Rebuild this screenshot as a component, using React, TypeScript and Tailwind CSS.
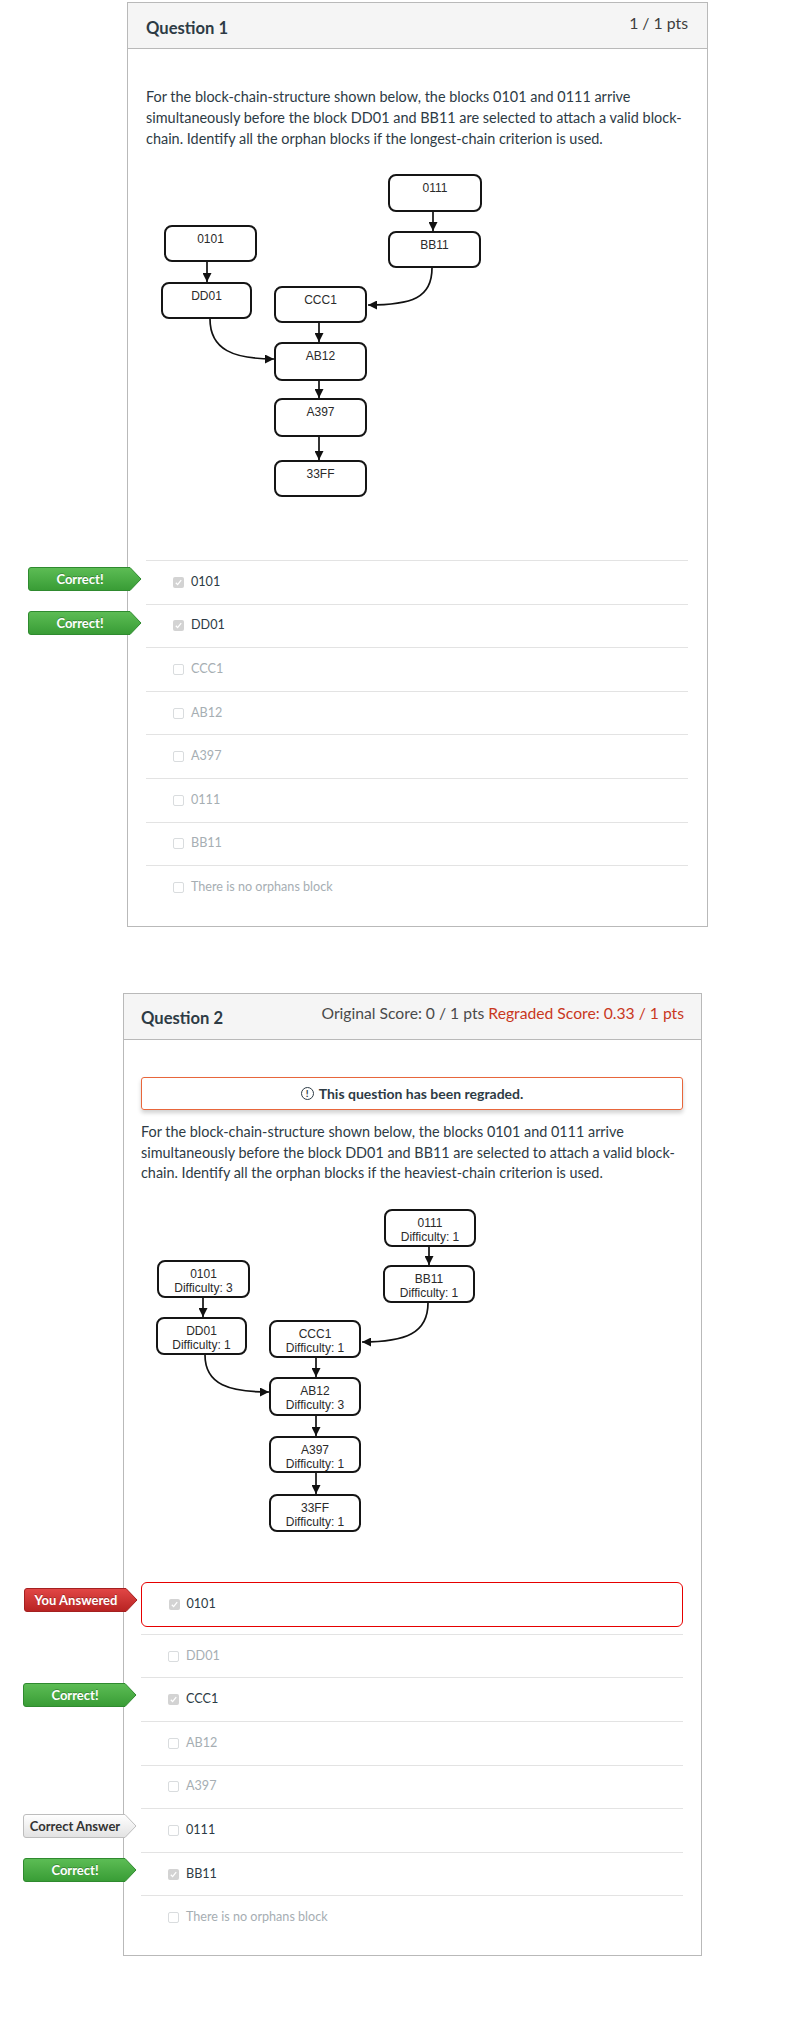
import React from 'react';

const INK = '#2d3b45';

type Box = { x: number; y: number; w: number; h: number; lines: string[] };

function Node({ b }: { b: Box }) {
  const cx = b.x + b.w / 2;
  return (
    <g>
      <rect x={b.x + 1} y={b.y + 1} width={b.w - 2} height={b.h - 2} rx={7} fill="#fff" stroke="#151515" strokeWidth={2} />
      {b.lines.map((t, i) => (
        <text
          key={i}
          x={cx}
          y={b.y + 18 + i * 14}
          textAnchor="middle"
          fontSize={12}
          fill="#2a2a2a"
          fontFamily="'Liberation Sans', Arial, sans-serif"
        >
          {t}
        </text>
      ))}
    </g>
  );
}

function Diagram({ id, vb, boxes, paths }: { id: string; vb: [number, number, number, number]; boxes: Box[]; paths: string[] }) {
  return (
    <svg width={vb[2]} height={vb[3]} viewBox={vb.join(' ')} className="block">
      <defs>
        <marker id={id} viewBox="0 0 10 10" refX="10" refY="5" markerWidth="10" markerHeight="9" markerUnits="userSpaceOnUse" orient="auto">
          <path d="M0 0 L10 5 L0 10 z" fill="#111" />
        </marker>
      </defs>
      {paths.map((d, i) => (
        <path key={i} d={d} fill="none" stroke="#111" strokeWidth={1.7} markerEnd={`url(#${id})`} />
      ))}
      {boxes.map((b, i) => (
        <Node key={i} b={b} />
      ))}
    </svg>
  );
}

type BadgeKind = 'green' | 'red' | 'gray';

function Badge({ kind, label }: { kind: BadgeKind; label: string }) {
  const fill = { green: 'url(#bd-green)', red: 'url(#bd-red)', gray: 'url(#bd-gray)' }[kind];
  const stroke = { green: '#2f8a2f', red: '#a52020', gray: '#bdbdbd' }[kind];
  return (
    <div className="relative w-[114px] h-[24px]">
      <svg width="114" height="24" className="absolute left-0 top-0">
        <defs>
          <linearGradient id="bd-green" x1="0" y1="0" x2="0" y2="1">
            <stop offset="0" stopColor="#5dbd55" />
            <stop offset="1" stopColor="#389c35" />
          </linearGradient>
          <linearGradient id="bd-red" x1="0" y1="0" x2="0" y2="1">
            <stop offset="0" stopColor="#e24746" />
            <stop offset="1" stopColor="#b72322" />
          </linearGradient>
          <linearGradient id="bd-gray" x1="0" y1="0" x2="0" y2="1">
            <stop offset="0" stopColor="#ffffff" />
            <stop offset="1" stopColor="#e2e2e2" />
          </linearGradient>
        </defs>
        <path
          d="M3 0.5 H102 L113 12 L102 23.5 H3 Q0.5 23.5 0.5 21 V3 Q0.5 0.5 3 0.5 Z"
          fill={fill}
          stroke={stroke}
          strokeWidth={1}
        />
      </svg>
      <span
        className={
          kind === 'gray'
            ? 'absolute left-0 top-0 w-[104px] text-center leading-[24px] text-[13px] font-bold text-[#333]'
            : 'absolute left-0 top-0 w-[104px] text-center leading-[24px] text-[13px] font-bold text-white [text-shadow:0_-1px_0_rgba(0,0,0,0.25)]'
        }
      >
        {label}
      </span>
    </div>
  );
}

function Check({ checked }: { checked: boolean }) {
  if (checked) {
    return (
      <span className="flex items-center justify-center w-[11px] h-[11px] rounded-[2px] bg-[#d3d3d3]">
        <svg width="9" height="9" viewBox="0 0 9 9">
          <path d="M1.8 4.8 L3.6 6.6 L7.2 2.2" fill="none" stroke="#fff" strokeWidth="1.3" />
        </svg>
      </span>
    );
  }
  return <span className="block w-[11px] h-[11px] rounded-[2px] border border-[#d9dcde] bg-white" />;
}

type Answer = { label: string; checked: boolean; dim: boolean; badge?: { kind: BadgeKind; label: string }; boxed?: boolean };

function AnswerRow({ a, badgeTop }: { a: Answer; badgeTop: string }) {
  return (
    <div
      className={
        a.boxed
          ? 'relative flex items-center h-[45px] border border-[#e60000] rounded-[6px] pl-[26.5px]'
          : 'relative flex items-center h-[43.6px] border-t border-[#e3e3e3] pl-[27px]'
      }
    >
      {a.badge && (
        <div className={`absolute left-[-118px] ${badgeTop}`}>
          <Badge kind={a.badge.kind} label={a.badge.label} />
        </div>
      )}
      <Check checked={a.checked} />
      <span className={`ml-[7px] text-[12.6px] ${a.dim ? 'text-[#a6aeb3]' : 'text-[#2d3b45]'}`}>{a.label}</span>
    </div>
  );
}

const q1Boxes: Box[] = [
  { x: 388, y: 174, w: 94, h: 38, lines: ['0111'] },
  { x: 164, y: 225, w: 93, h: 37, lines: ['0101'] },
  { x: 388, y: 231, w: 93, h: 37, lines: ['BB11'] },
  { x: 161, y: 282, w: 91, h: 37, lines: ['DD01'] },
  { x: 274, y: 286, w: 93, h: 37, lines: ['CCC1'] },
  { x: 274, y: 342, w: 93, h: 39, lines: ['AB12'] },
  { x: 274, y: 398, w: 93, h: 39, lines: ['A397'] },
  { x: 274, y: 460, w: 93, h: 37, lines: ['33FF'] },
];

const q1Paths = [
  'M207 262 V282',
  'M433 212 V231',
  'M432 268 C432 298 412 305 368 305',
  'M210 319 C210 350 234 359 274 359',
  'M319 323 V342',
  'M319 381 V398',
  'M319 437 V460',
];

const q2Boxes: Box[] = [
  { x: 384, y: 1209, w: 92, h: 38, lines: ['0111', 'Difficulty: 1'] },
  { x: 157, y: 1260, w: 93, h: 38, lines: ['0101', 'Difficulty: 3'] },
  { x: 383, y: 1265, w: 92, h: 38, lines: ['BB11', 'Difficulty: 1'] },
  { x: 156, y: 1317, w: 91, h: 38, lines: ['DD01', 'Difficulty: 1'] },
  { x: 269, y: 1320, w: 92, h: 38, lines: ['CCC1', 'Difficulty: 1'] },
  { x: 269, y: 1377, w: 92, h: 39, lines: ['AB12', 'Difficulty: 3'] },
  { x: 269, y: 1436, w: 92, h: 37, lines: ['A397', 'Difficulty: 1'] },
  { x: 269, y: 1494, w: 92, h: 38, lines: ['33FF', 'Difficulty: 1'] },
];

const q2Paths = [
  'M203 1298 V1317',
  'M429 1247 V1265',
  'M428 1303 C428 1333 406 1342 362 1342',
  'M205 1355 C205 1385 230 1392 269 1392',
  'M316 1358 V1377',
  'M316 1416 V1436',
  'M316 1473 V1494',
];

const q1Answers: Answer[] = [
  { label: '0101', checked: true, dim: false, badge: { kind: 'green', label: 'Correct!' } },
  { label: 'DD01', checked: true, dim: false, badge: { kind: 'green', label: 'Correct!' } },
  { label: 'CCC1', checked: false, dim: true },
  { label: 'AB12', checked: false, dim: true },
  { label: 'A397', checked: false, dim: true },
  { label: '0111', checked: false, dim: true },
  { label: 'BB11', checked: false, dim: true },
  { label: 'There is no orphans block', checked: false, dim: true },
];

const q2First: Answer = { label: '0101', checked: true, dim: false, boxed: true, badge: { kind: 'red', label: 'You Answered' } };

const q2Answers: Answer[] = [
  { label: 'DD01', checked: false, dim: true },
  { label: 'CCC1', checked: true, dim: false, badge: { kind: 'green', label: 'Correct!' } },
  { label: 'AB12', checked: false, dim: true },
  { label: 'A397', checked: false, dim: true },
  { label: '0111', checked: false, dim: false, badge: { kind: 'gray', label: 'Correct Answer' } },
  { label: 'BB11', checked: true, dim: false, badge: { kind: 'green', label: 'Correct!' } },
  { label: 'There is no orphans block', checked: false, dim: true },
];

export default function App() {
  return (
    <div className="w-[804px] min-h-[2024px] bg-white pt-[2px] font-[Lato,sans-serif]" style={{ color: INK }}>
      {/* Question 1 */}
      <div className="ml-[127px] w-[581px] border border-[#b9b9b9]">
        <div className="h-[46px] bg-[#f5f5f5] border-b border-[#b9b9b9] flex justify-between items-start pl-[18px] pr-[19px]">
          <div className="mt-[13px] leading-[24px] text-[16.6px] font-bold text-[#2d3b45]">Question 1</div>
          <div className="mt-[8px] leading-[24px] text-[15.8px] text-[#3d3d3d]">1 / 1 pts</div>
        </div>
        <div className="pl-[18px] pr-[19px] pb-[17px]">
          <p className="pt-[37px] text-[14.45px] leading-[21px] text-[#2d3b45]">
            For the block-chain-structure shown below, the blocks 0101 and 0111 arrive simultaneously before the block DD01 and BB11 are selected to attach a valid block-chain. Identify all the orphan blocks if the longest-chain criterion is used.
          </p>
          <div className="mt-[1px]">
            <Diagram id="arrow-q1" vb={[146, 150, 542, 360]} boxes={q1Boxes} paths={q1Paths} />
          </div>
          <div className="mt-[50px]">
            {q1Answers.map((a, i) => (
              <AnswerRow key={i} a={a} badgeTop="top-[6px]" />
            ))}
          </div>
        </div>
      </div>

      {/* Question 2 */}
      <div className="ml-[123px] mt-[66px] w-[579px] border border-[#b9b9b9]">
        <div className="h-[46px] bg-[#f5f5f5] border-b border-[#b9b9b9] flex justify-between items-start pl-[17px] pr-[17px]">
          <div className="mt-[12px] leading-[24px] text-[16.6px] font-bold text-[#2d3b45]">Question 2</div>
          <div className="mt-[7px] leading-[24px] text-[15.7px] text-[#4a4a4a]">
            Original Score: 0 / 1 pts <span className="text-[#c9381d]">Regraded Score: 0.33 / 1 pts</span>
          </div>
        </div>
        <div className="pl-[17px] pr-[18px] pb-[16px]">
          <div className="mt-[37px] h-[33px] border border-[#e8663b] rounded-[3px] shadow-[0_3px_4px_rgba(0,0,0,0.18)] flex items-center justify-center gap-[5px]">
            <span className="flex items-center justify-center w-[13px] h-[13px] rounded-full border border-[#2d3b45] text-[10px] font-bold leading-none">!</span>
            <span className="text-[14px] font-bold text-[#2d3b45]">This question has been regraded.</span>
          </div>
          <p className="mt-[12.5px] text-[14.4px] leading-[20.5px] text-[#2d3b45]">
            For the block-chain-structure shown below, the blocks 0101 and 0111 arrive simultaneously before the block DD01 and BB11 are selected to attach a valid block-chain. Identify all the orphan blocks if the heaviest-chain criterion is used.
          </p>
          <div className="mt-[6px]">
            <Diagram id="arrow-q2" vb={[141, 1190, 541, 360]} boxes={q2Boxes} paths={q2Paths} />
          </div>
          <div className="mt-[32px]">
            <AnswerRow a={q2First} badgeTop="top-[5px]" />
          </div>
          <div className="mt-[7px]">
            {q2Answers.map((a, i) => (
              <AnswerRow key={i} a={a} badgeTop="top-[5px]" />
            ))}
          </div>
        </div>
      </div>
    </div>
  );
}
